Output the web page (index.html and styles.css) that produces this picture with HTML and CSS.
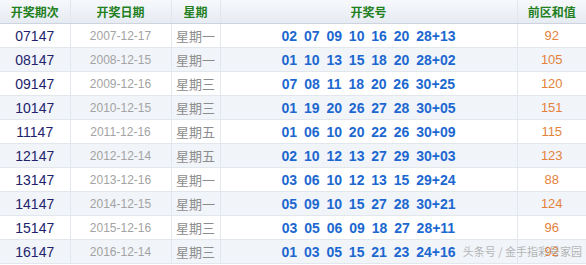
FILE: index.html
```html
<!DOCTYPE html>
<html>
<head>
<meta charset="utf-8">
<link rel="stylesheet" href="styles.css">
</head>
<body>
<div class="wrap">
<table class="tbl">
<colgroup>
<col class="c1"><col class="c2"><col class="c3"><col class="c4"><col class="c5">
</colgroup>
<thead>
<tr><th>开奖期次</th><th>开奖日期</th><th>星期</th><th>开奖号</th><th>前区和值</th></tr>
</thead>
<tbody>
<tr><td class="issue">07147</td><td class="date">2007-12-17</td><td class="wd">星期一</td><td class="num">02 07 09 10 16 20 28+13</td><td class="sum">92</td></tr>
<tr><td class="issue">08147</td><td class="date">2008-12-15</td><td class="wd">星期一</td><td class="num">01 10 13 15 18 20 28+02</td><td class="sum">105</td></tr>
<tr><td class="issue">09147</td><td class="date">2009-12-16</td><td class="wd">星期三</td><td class="num">07 08 11 18 20 26 30+25</td><td class="sum">120</td></tr>
<tr><td class="issue">10147</td><td class="date">2010-12-15</td><td class="wd">星期三</td><td class="num">01 19 20 26 27 28 30+05</td><td class="sum">151</td></tr>
<tr><td class="issue">11147</td><td class="date">2011-12-16</td><td class="wd">星期五</td><td class="num">01 06 10 20 22 26 30+09</td><td class="sum">115</td></tr>
<tr><td class="issue">12147</td><td class="date">2012-12-14</td><td class="wd">星期五</td><td class="num">02 10 12 13 27 29 30+03</td><td class="sum">123</td></tr>
<tr><td class="issue">13147</td><td class="date">2013-12-16</td><td class="wd">星期一</td><td class="num">03 06 10 12 13 15 29+24</td><td class="sum">88</td></tr>
<tr><td class="issue">14147</td><td class="date">2014-12-15</td><td class="wd">星期一</td><td class="num">05 09 10 15 27 28 30+21</td><td class="sum">124</td></tr>
<tr><td class="issue">15147</td><td class="date">2015-12-16</td><td class="wd">星期三</td><td class="num">03 05 06 09 18 27 28+11</td><td class="sum">96</td></tr>
<tr><td class="issue">16147</td><td class="date">2016-12-14</td><td class="wd">星期三</td><td class="num">01 03 05 15 21 23 24+16</td><td class="sum">92</td></tr>
</tbody>
</table>
<div class="mark">头条号 / 金手指彩号家园</div>
</div>
</body>
</html>
```
FILE: styles.css
```css
html, body { margin: 0; padding: 0; background: #fff; }
.wrap { position: relative; width: 586px; }
.tbl {
  width: 586px;
  border-collapse: collapse;
  table-layout: fixed;
  font-family: "Liberation Sans", Arial, "Noto Sans CJK SC", sans-serif;
}
.c1 { width: 70px; }
.c2 { width: 101px; }
.c3 { width: 49px; }
.c4 { width: 297px; }
.c5 { width: 69px; }
.tbl th, .tbl td {
  height: 23px;
  padding: 0;
  text-align: center;
  border: 1px solid #e2e6ed;
  white-space: nowrap;
}
.tbl th:first-child, .tbl td:first-child { border-left: none; }
.tbl th:last-child, .tbl td:last-child { border-right: none; }
.tbl thead th {
  border-top: none;
  background: linear-gradient(#f6f8fb, #e6ebf2);
  border-bottom: 1px solid #cdd4df;
  color: #23801f;
  font-size: 12px;
  font-weight: bold;
  font-family: "Noto Sans CJK SC", "Liberation Sans", sans-serif;
}
.tbl tbody tr:nth-child(odd) td { background: #ffffff; }
.tbl tbody tr:nth-child(even) td { background: #f1f4f9; }
.issue { color: #22226c; font-size: 14px; }
.date { color: #a3a3a3; font-size: 12px; }
.wd { color: #8c8c8c; font-size: 13px; font-family: "Noto Sans CJK SC", sans-serif; }
.num { color: #1c68d0; font-size: 14px; font-weight: bold; word-spacing: 3px; }
.sum { color: #e4823c; font-size: 13px; }
.mark {
  position: absolute;
  right: 4px;
  bottom: 5px;
  font-size: 11px;
  color: rgba(150,150,150,0.7);
  font-family: "Noto Sans CJK SC", sans-serif;
}
```
